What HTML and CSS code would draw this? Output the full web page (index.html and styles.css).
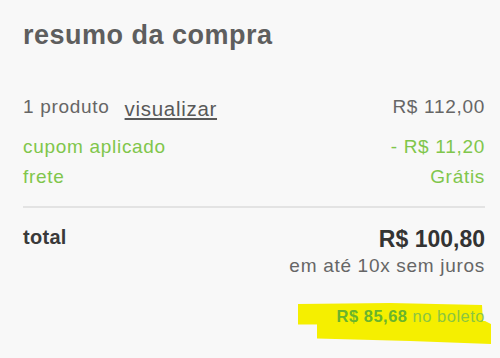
FILE: index.html
```html
<!DOCTYPE html>
<html lang="pt-BR">
<head>
<meta charset="utf-8">
<title>resumo da compra</title>
<link rel="stylesheet" href="styles.css">
</head>
<body>
<main class="summary">
  <h1 class="title">resumo da compra</h1>

  <div class="row row-products">
    <span class="label">1 produto <a class="link" href="#">visualizar</a></span>
    <span class="value">R$ 112,00</span>
  </div>
  <div class="row row-coupon green">
    <span class="label">cupom aplicado</span>
    <span class="value">- R$ 11,20</span>
  </div>
  <div class="row row-shipping green">
    <span class="label">frete</span>
    <span class="value">Grátis</span>
  </div>

  <hr class="divider">

  <div class="total-row">
    <span class="total-label">total</span>
    <div class="total-values">
      <span class="total-price">R$ 100,80</span>
      <span class="installments">em até 10x sem juros</span>
    </div>
  </div>

  <div class="boleto">
    <svg class="highlight" width="211" height="44" viewBox="0 0 211 44" aria-hidden="true">
      <path d="M8 3 L100 2 L192 4 L193 23 L8 23.5 Z" fill="#f5ef00"/>
      <path d="M27 19 L195 20 L201 23 L201 43 L120 40 L27 37.5 Z" fill="#f5ef00"/>
    </svg>
    <span class="boleto-text"><strong class="boleto-price">R$ 85,68</strong> no boleto</span>
  </div>
</main>
</body>
</html>
```

FILE: styles.css
```css
html, body {
  margin: 0;
  padding: 0;
  background: #f8f8f8;
}

.summary {
  font-family: "Liberation Sans", Arial, sans-serif;
  color: #666;
  padding: 19px 15px 0 23px;
  height: 358px;
  box-sizing: border-box;
}

.title {
  margin: 0;
  font-size: 27px;
  line-height: 32px;
  font-weight: bold;
  letter-spacing: 0.5px;
  color: #5e5e5e;
}

.row {
  display: flex;
  justify-content: space-between;
  align-items: flex-start;
  font-size: 19px;
  line-height: 24px;
  letter-spacing: 0.7px;
}

.row-products {
  margin-top: 44px;
  color: #666;
}

.row-coupon {
  margin-top: 14px;
}

.row-shipping {
  margin-top: 6px;
}

.green {
  color: #80c64b;
}

.link {
  color: #585858;
  font-size: 20.5px;
  margin-left: 9px;
  vertical-align: -3px;
  text-decoration: underline;
  text-decoration-thickness: 1.5px;
  text-underline-offset: 2px;
}

.divider {
  margin: 17px 0 0;
  border: 0;
  height: 2px;
  background: #e3e3e3;
}

.total-row {
  display: flex;
  justify-content: space-between;
  align-items: flex-start;
  margin-top: 17px;
}

.total-label {
  font-size: 20px;
  line-height: 24px;
  font-weight: bold;
  color: #3a3a3a;
  letter-spacing: 0.3px;
}

.total-values {
  display: flex;
  flex-direction: column;
  align-items: flex-end;
  gap: 1px;
}

.total-price {
  font-size: 23px;
  line-height: 28px;
  font-weight: bold;
  color: #333;
}

.installments {
  font-size: 19px;
  line-height: 24px;
  letter-spacing: 0.7px;
  color: #666;
}

.boleto {
  position: relative;
  display: flex;
  justify-content: flex-end;
  margin-top: 28px;
  font-size: 16.5px;
  line-height: 20px;
  letter-spacing: 0.5px;
}

.highlight {
  position: absolute;
  right: -16px;
  top: -5px;
}

.boleto-text {
  position: relative;
  color: #8cc63f;
}

.boleto-price {
  color: #6ab42c;
  font-weight: bold;
}
```
